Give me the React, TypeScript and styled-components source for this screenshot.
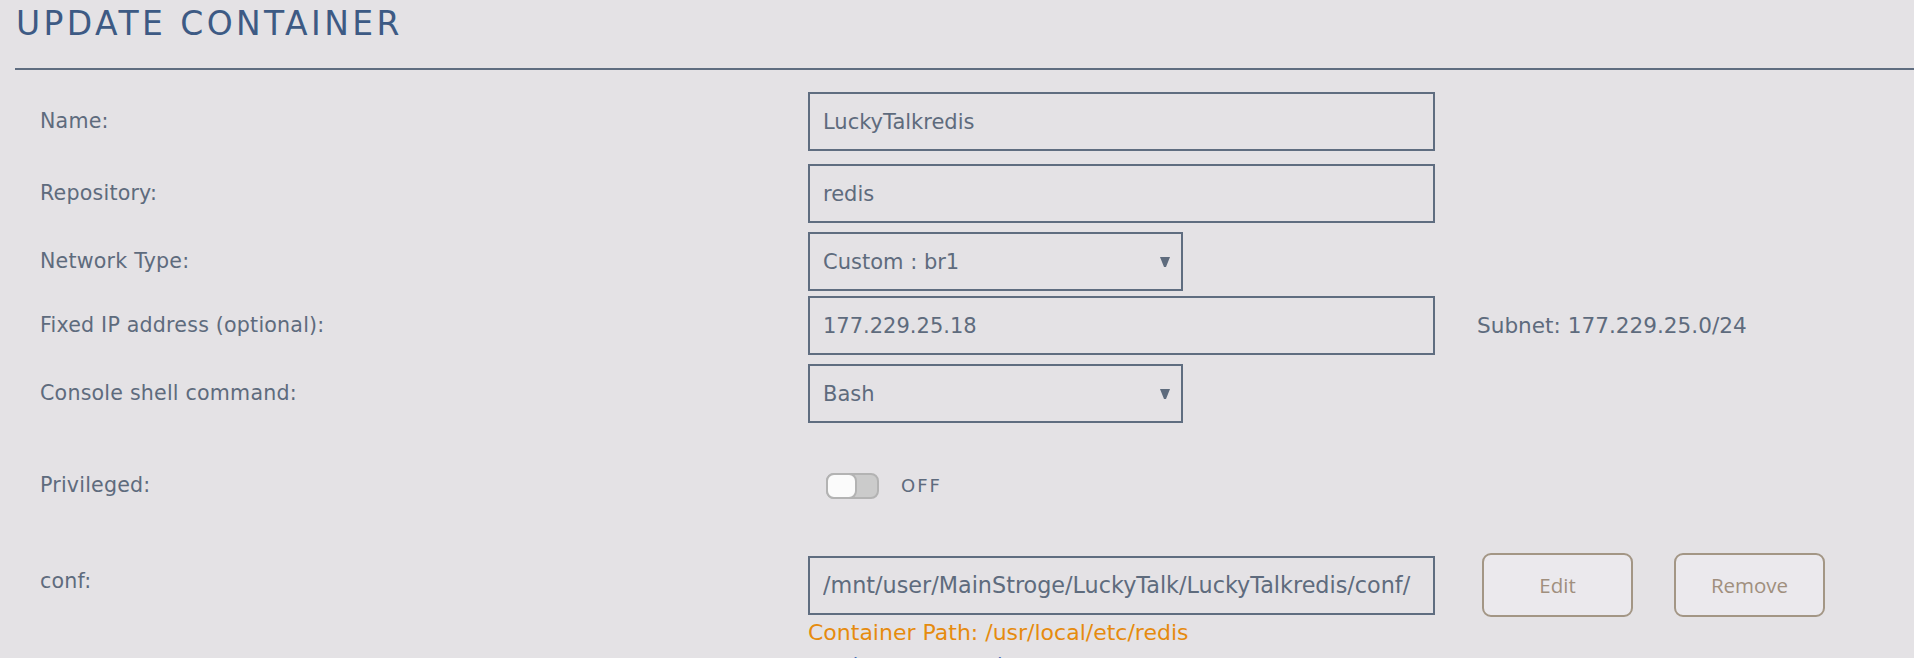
import React from "react";
import styled, { createGlobalStyle } from "styled-components";

const GlobalStyle = createGlobalStyle`
  html, body {
    margin: 0;
    padding: 0;
    background: #e4e2e5;
    font-family: "DejaVu Sans", Verdana, sans-serif;
    color: #5e6b7d;
  }
  * { box-sizing: border-box; }
`;

const Page = styled.div`
  width: 1914px;
  height: 658px;
  overflow: hidden;
  background: #e4e2e5;
`;

const Header = styled.div`
  margin-left: 15px;
  padding: 5px 0 25px 1px;
  border-bottom: 2px solid #5f6d80;
`;

const Title = styled.h1`
  margin: 0;
  font-family: "DejaVu Sans", sans-serif;
  font-weight: 400;
  font-size: 33px;
  line-height: 38px;
  letter-spacing: 3.4px;
  color: #3d5a84;
  text-transform: uppercase;
`;

const Form = styled.div`
  padding-left: 40px;
  display: flex;
  flex-direction: column;
`;

const Row = styled.div<{ $top: number }>`
  display: grid;
  grid-template-columns: 768px 1fr;
  align-items: center;
  margin-top: ${(p) => p.$top}px;
`;

const Label = styled.div<{ $offset?: number }>`
  font-size: 20.6px;
  letter-spacing: 0.2px;
  line-height: 23px;
  color: #5e6b7d;
  align-self: ${(p) => (p.$offset !== undefined ? "start" : "center")};
  padding-top: ${(p) => p.$offset ?? 0}px;
`;

const Controls = styled.div`
  display: flex;
  align-items: center;
`;

const TextBox = styled.input<{ $size?: number }>`
  width: 627px;
  height: 59px;
  border: 2px solid #5f6d80;
  background: transparent;
  padding: 0 0 0 13px;
  font-family: "DejaVu Sans", sans-serif;
  font-size: ${(p) => p.$size ?? 21}px;
  color: #5e6b7d;
  outline: none;
  margin: 0;
`;

const SelectBox = styled.div`
  width: 375px;
  height: 59px;
  border: 2px solid #5f6d80;
  display: flex;
  align-items: center;
  justify-content: space-between;
  padding: 0 10px 0 13px;
  font-size: 21px;
  color: #5e6b7d;
`;

const Hint = styled.span`
  margin-left: 42px;
  font-size: 21.6px;
  color: #5e6b7d;
`;

const ToggleWrap = styled.div`
  display: flex;
  align-items: center;
  height: 59px;
  padding-left: 18px;
`;

const Track = styled.div`
  width: 53px;
  height: 26px;
  border-radius: 8px;
  border: 2px solid #b3b3b3;
  background: #cbcbcb;
  display: flex;
`;

const Knob = styled.div`
  width: 27px;
  height: 100%;
  margin: -2px 0 0 -2px;
  box-sizing: content-box;
  border: 2px solid #b3b3b3;
  border-radius: 8px;
  background: #fbfbfb;
`;

const ToggleText = styled.span`
  margin-left: 22px;
  font-size: 18px;
  letter-spacing: 2px;
  color: #5e6b7d;
`;

const PathBlock = styled.div`
  display: flex;
  flex-direction: column;
`;

const Button = styled.button<{ $gap: number }>`
  width: 151px;
  height: 64px;
  margin-left: ${(p) => p.$gap}px;
  border: 2px solid #a39685;
  border-radius: 9px;
  background: #ebe9ed;
  color: #a08f7e;
  font-family: "Open Sans", sans-serif;
  font-size: 20.5px;
  padding: 0;
  cursor: pointer;
`;

const ContainerPath = styled.div`
  margin-top: 3px;
  font-size: 22px;
  color: #e68b0e;
  white-space: nowrap;
`;

const MoreLink = styled.a`
  margin-top: 8px;
  padding-left: 32px;
  font-size: 20px;
  color: #4a6db8;
  text-decoration: none;
  white-space: nowrap;
`;

const Arrow = () => (
  <svg width="12" height="12" viewBox="0 0 12 12">
    <polygon points="1,1 11,1 7,11 5,11" fill="#5e6b7d" />
  </svg>
);

export default function App() {
  return (
    <Page>
      <GlobalStyle />
      <Header>
        <Title>Update Container</Title>
      </Header>
      <Form>
        <Row $top={22}>
          <Label>Name:</Label>
          <Controls>
            <TextBox readOnly value="LuckyTalkredis" />
          </Controls>
        </Row>
        <Row $top={13}>
          <Label>Repository:</Label>
          <Controls>
            <TextBox readOnly value="redis" />
          </Controls>
        </Row>
        <Row $top={9}>
          <Label>Network Type:</Label>
          <Controls>
            <SelectBox>
              <span>Custom : br1</span>
              <Arrow />
            </SelectBox>
          </Controls>
        </Row>
        <Row $top={5}>
          <Label>Fixed IP address (optional):</Label>
          <Controls>
            <TextBox readOnly value="177.229.25.18" />
            <Hint>Subnet: 177.229.25.0/24</Hint>
          </Controls>
        </Row>
        <Row $top={9}>
          <Label>Console shell command:</Label>
          <Controls>
            <SelectBox>
              <span>Bash</span>
              <Arrow />
            </SelectBox>
          </Controls>
        </Row>
        <Row $top={33}>
          <Label>Privileged:</Label>
          <ToggleWrap>
            <Track>
              <Knob />
            </Track>
            <ToggleText>OFF</ToggleText>
          </ToggleWrap>
        </Row>
        <Row $top={38}>
          <Label $offset={17}>conf:</Label>
          <PathBlock>
            <Controls>
              <TextBox $size={22.3} readOnly value="/mnt/user/MainStroge/LuckyTalk/LuckyTalkredis/conf/" />
              <Button $gap={47}>Edit</Button>
              <Button $gap={41}>Remove</Button>
            </Controls>
            <ContainerPath>Container Path: /usr/local/etc/redis</ContainerPath>
            <MoreLink href="#">Show more settings ...</MoreLink>
          </PathBlock>
        </Row>
      </Form>
    </Page>
  );
}
